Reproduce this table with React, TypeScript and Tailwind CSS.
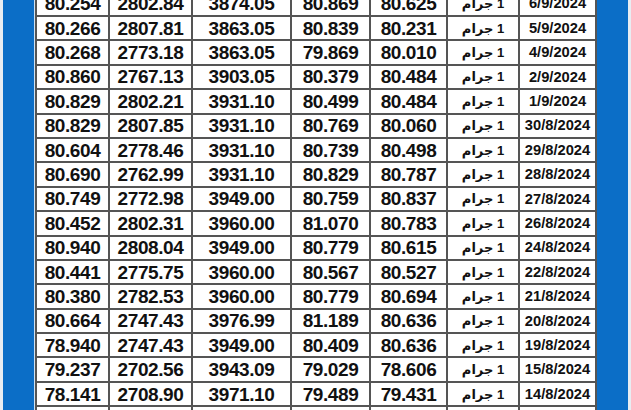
import React from "react";

const rows: string[][] = [
  ["80.254", "2802.84", "3874.05", "80.869", "80.625", "6/9/2024"],
  ["80.266", "2807.81", "3863.05", "80.839", "80.231", "5/9/2024"],
  ["80.268", "2773.18", "3863.05", "79.869", "80.010", "4/9/2024"],
  ["80.860", "2767.13", "3903.05", "80.379", "80.484", "2/9/2024"],
  ["80.829", "2802.21", "3931.10", "80.499", "80.484", "1/9/2024"],
  ["80.829", "2807.85", "3931.10", "80.769", "80.060", "30/8/2024"],
  ["80.604", "2778.46", "3931.10", "80.739", "80.498", "29/8/2024"],
  ["80.690", "2762.99", "3931.10", "80.829", "80.787", "28/8/2024"],
  ["80.749", "2772.98", "3949.00", "80.759", "80.837", "27/8/2024"],
  ["80.452", "2802.31", "3960.00", "81.070", "80.783", "26/8/2024"],
  ["80.940", "2808.04", "3949.00", "80.779", "80.615", "24/8/2024"],
  ["80.441", "2775.75", "3960.00", "80.567", "80.527", "22/8/2024"],
  ["80.380", "2782.53", "3960.00", "80.779", "80.694", "21/8/2024"],
  ["80.664", "2747.43", "3976.99", "81.189", "80.636", "20/8/2024"],
  ["78.940", "2747.43", "3949.00", "80.409", "80.636", "19/8/2024"],
  ["79.237", "2702.56", "3943.09", "79.029", "78.606", "15/8/2024"],
  ["78.141", "2708.90", "3971.10", "79.489", "79.431", "14/8/2024"],
  ["", "", "", "", "", ""],
];

const font = { fontFamily: '"Liberation Sans", Arial, "DejaVu Sans", sans-serif' };

export default function App() {
  return (
    <div
      className="w-[631px] h-[410px] overflow-hidden flex bg-[#eef1f4]"
      style={font}
    >
      <div className="w-[3px] shrink-0 bg-[#e8edf2]" />
      <div className="w-[31px] shrink-0 bg-[#0b6ec7]" />
      <div className="w-[1px] shrink-0 bg-[#cfe2f3]" />
      <div className="w-[562px] shrink-0 -mt-[9.4px] self-start">
        <div className="grid grid-cols-[71px_81px_97px_77px_75px_70px_75px] auto-rows-[22.4px] gap-[2px] p-[2px] bg-[#555555]">
          {rows.map((r, i) => (
            <React.Fragment key={i}>
              {r.slice(0, 5).map((v, j) => (
                <div
                  key={j}
                  className="bg-white flex items-center justify-center font-bold text-[19px] tracking-[-0.4px] text-[#111] leading-none"
                >
                  {v}
                </div>
              ))}
              <div
                dir="rtl"
                className="bg-white flex items-center justify-center font-bold text-[13px] text-[#111] leading-none"
                style={{ fontFamily: '"Liberation Sans", "DejaVu Sans", sans-serif' }}
              >
                {r[5] ? "1 جرام" : ""}
              </div>
              <div className="bg-white flex items-center justify-center font-bold text-[14.7px] text-[#111] leading-none">
                {r[5]}
              </div>
            </React.Fragment>
          ))}
        </div>
      </div>
      <div className="w-[31px] shrink-0 bg-[#0b6ec7]" />
      <div className="w-[3px] shrink-0 bg-[#e8edf2]" />
    </div>
  );
}
